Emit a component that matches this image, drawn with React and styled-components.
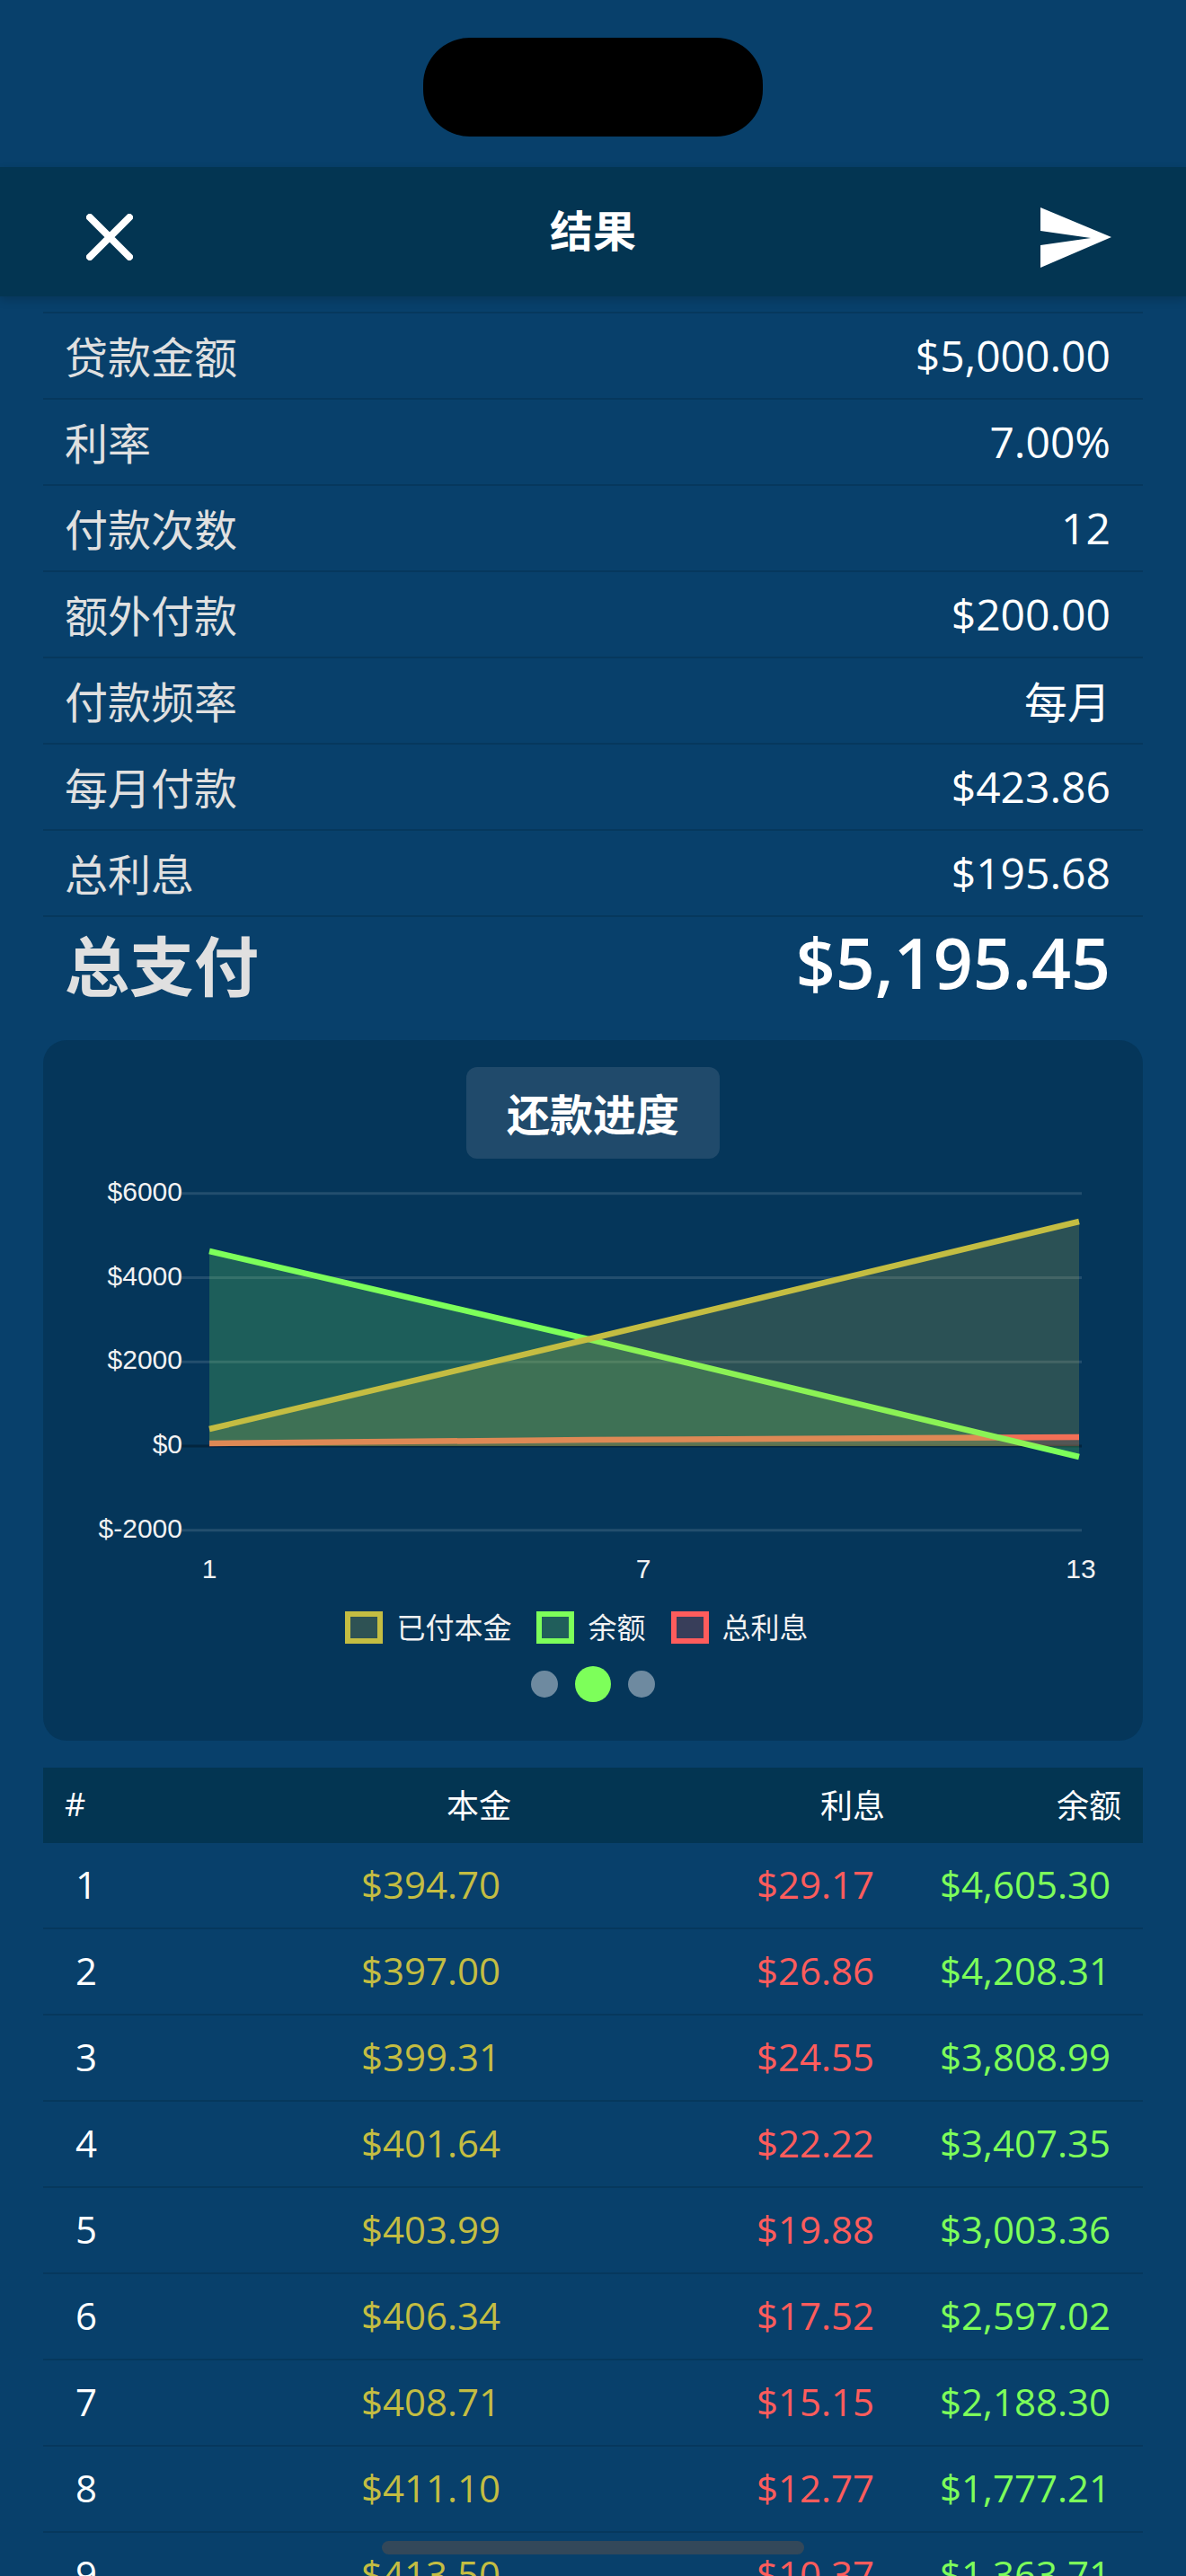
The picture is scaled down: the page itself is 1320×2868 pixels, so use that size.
import styled, { createGlobalStyle } from "styled-components"

const YELLOW = "#c4bd42"
const GREEN = "#7dff5a"
const RED = "#ff5c5c"
const CJK = `"Open Sans", "Noto Sans CJK SC", sans-serif`

const GlobalStyle = createGlobalStyle`
    html, body { margin: 0; padding: 0; background: #08406b; }
    * { box-sizing: border-box; }
`

const Screen = styled.div`
    position: relative;
    width: 1320px;
    height: 2868px;
    overflow: hidden;
    background: #08406b;
    font-family: ${CJK};
    color: #fff;
`

const StatusBar = styled.div`
    height: 186px;
    padding-top: 42px;
    display: flex;
    justify-content: center;
`

const Notch = styled.div`
    width: 378px;
    height: 110px;
    border-radius: 52px;
    background: #000;
`

const NavBar = styled.div`
    position: relative;
    height: 144px;
    padding: 0 83px;
    display: grid;
    grid-template-columns: 1fr auto 1fr;
    align-items: center;
    background: #033552;
    box-shadow: 0 4px 10px rgba(0, 0, 0, 0.16);
`

const NavTitle = styled.div`
    font-size: 48px;
    font-weight: 700;
    line-height: 1;
    margin-bottom: 2px;
`

const NavIcon = styled.svg`
    display: block;
    margin: 12px ${(p) => (p.$end ? 0 : "auto")} 0 ${(p) => (p.$end ? "auto" : "13px")};
`

const InfoList = styled.div`
    margin: 17px 48px 0;
    border-top: 2px solid rgba(0, 30, 50, 0.25);
`

const InfoRow = styled.div`
    height: 96px;
    padding: 0 36px 2px 24px;
    display: flex;
    justify-content: space-between;
    align-items: center;
    border-bottom: 2px solid rgba(0, 30, 50, 0.25);
    font-size: 48px;
`

const InfoLabel = styled.span`
    color: #e0e0e0;
`

const TotalRow = styled.div`
    height: 107px;
    padding: 0 36px 6px 24px;
    display: flex;
    justify-content: space-between;
    align-items: center;
`

const TotalLabel = styled.span`
    font-size: 72px;
    font-weight: 700;
    color: #e0e0e0;
`

const TotalValue = styled.span`
    font-size: 77px;
    font-weight: 600;
`

const ChartCard = styled.div`
    height: 780px;
    margin: 30px 48px 0;
    padding-top: 30px;
    border-radius: 26px;
    background: #05365a;
`

const ChartTitle = styled.div`
    width: 282px;
    height: 102px;
    margin: 0 auto;
    padding-bottom: 2px;
    display: flex;
    align-items: center;
    justify-content: center;
    border-radius: 12px;
    background: #204a6b;
    font-size: 48px;
    font-weight: 700;
`

const ChartSvg = styled.svg`
    display: block;
    width: 1224px;
    height: 504px;
    text {
        font-family: "Liberation Sans", Arial, sans-serif;
        font-size: 30px;
        fill: #f2f2f2;
    }
`

const Legend = styled.div`
    height: 36px;
    padding-right: 36px;
    display: flex;
    justify-content: center;
    gap: 28px;
`

const LegendItem = styled.div`
    display: flex;
    align-items: center;
    gap: 15px;
    font-size: 32px;
    line-height: 36px;
    color: #f2f2f2;
`

const LegendBox = styled.div`
    width: 42px;
    height: 36px;
    border: 6px solid ${(p) => p.$color};
    background: ${(p) => p.$fill};
`

const Dots = styled.div`
    height: 40px;
    margin-top: 25px;
    display: flex;
    justify-content: center;
    align-items: center;
    gap: 19px;
`

const Dot = styled.div`
    width: ${(p) => (p.$active ? 40 : 30)}px;
    height: ${(p) => (p.$active ? 40 : 30)}px;
    border-radius: 50%;
    background: ${(p) => (p.$active ? GREEN : "#6e8aa0")};
`

const Table = styled.div`
    margin: 30px 48px 0;
`

const TableHead = styled.div`
    height: 84px;
    padding: 0 24px 3px;
    display: grid;
    grid-template-columns: 190px 307px 416px 263px;
    align-items: center;
    background: #033552;
    font-size: 36px;
`

const HeadCell = styled.div`
    text-align: ${(p) => (p.$left ? "left" : "right")};
`

const TableRow = styled.div`
    height: 96px;
    padding: 0 24px 3px;
    display: grid;
    grid-template-columns: 190px 307px 416px 263px;
    align-items: center;
    border-bottom: 2px solid rgba(0, 30, 50, 0.25);
    font-size: 42px;
`

const IndexCell = styled.div`
    padding-left: 12px;
`

const MoneyCell = styled.div`
    padding-right: 12px;
    text-align: right;
    color: ${(p) => p.$color};
`

const HomeIndicator = styled.div`
    position: absolute;
    left: 425px;
    top: 2829px;
    width: 470px;
    height: 15px;
    border-radius: 8px;
    background: #33485a;
`

const details = [
    ["贷款金额", "$5,000.00"],
    ["利率", "7.00%"],
    ["付款次数", "12"],
    ["额外付款", "$200.00"],
    ["付款频率", "每月"],
    ["每月付款", "$423.86"],
    ["总利息", "$195.68"],
]

const payments = [
    ["1", "$394.70", "$29.17", "$4,605.30"],
    ["2", "$397.00", "$26.86", "$4,208.31"],
    ["3", "$399.31", "$24.55", "$3,808.99"],
    ["4", "$401.64", "$22.22", "$3,407.35"],
    ["5", "$403.99", "$19.88", "$3,003.36"],
    ["6", "$406.34", "$17.52", "$2,597.02"],
    ["7", "$408.71", "$15.15", "$2,188.30"],
    ["8", "$411.10", "$12.77", "$1,777.21"],
    ["9", "$413.50", "$10.37", "$1,363.71"],
]

// chart coordinates, relative to the top of the svg
const PLOT_LEFT = 185
const PLOT_MID = 607
const PLOT_RIGHT = 1153
const ZERO_Y = 320
const yOf = (v) => ZERO_Y - v * 0.046875

const gridValues = [6000, 4000, 2000, 0, -2000]
const xTicks = [
    { label: "1", x: PLOT_LEFT },
    { label: "7", x: 668 },
    { label: "13", x: PLOT_RIGHT + 2 },
]

// drawn in this order, the first legend entry ends up on top
const series = [
    { color: RED, ys: [317, 313, 310] },
    { color: GREEN, ys: [103, 201, 332] },
    { color: YELLOW, ys: [301, 201, 70] },
]

const linePoints = (ys) => `${PLOT_LEFT},${ys[0]} ${PLOT_MID},${ys[1]} ${PLOT_RIGHT},${ys[2]}`

const Chart = () => (
    <ChartSvg viewBox="0 0 1224 504">
        {gridValues.map((v) => (
            <g key={v}>
                <line
                    x1="154"
                    x2="1156"
                    y1={yOf(v)}
                    y2={yOf(v)}
                    stroke={v === 0 ? "rgba(0,0,0,0.3)" : "rgba(255,255,255,0.12)"}
                    strokeWidth="3"
                />
                <text x="155" y={yOf(v) + 8} textAnchor="end">
                    {v < 0 ? `$-${-v}` : `$${v}`}
                </text>
            </g>
        ))}
        {xTicks.map((t) => (
            <text key={t.label} x={t.x} y="467" textAnchor="middle">
                {t.label}
            </text>
        ))}
        {series.map((s) => (
            <g key={s.color}>
                <polygon
                    points={`${PLOT_LEFT},${ZERO_Y} ${linePoints(s.ys)} ${PLOT_RIGHT},${ZERO_Y}`}
                    fill={s.color}
                    fillOpacity="0.2"
                />
                <polyline points={linePoints(s.ys)} fill="none" stroke={s.color} strokeWidth="6.5" />
            </g>
        ))}
    </ChartSvg>
)

const App = () => (
    <Screen>
        <GlobalStyle />
        <StatusBar>
            <Notch />
        </StatusBar>
        <NavBar>
            <NavIcon width="52" height="52" viewBox="0 0 52 52">
                <path d="M4 4 L48 48 M48 4 L4 48" stroke="#fff" strokeWidth="8" strokeLinecap="round" fill="none" />
            </NavIcon>
            <NavTitle>结果</NavTitle>
            <NavIcon $end width="79" height="67" viewBox="0 0 79 67">
                <polygon points="0,0 79,33 0,67 0,42 56,34 0,26" fill="#fff" />
            </NavIcon>
        </NavBar>
        <InfoList>
            {details.map(([label, value]) => (
                <InfoRow key={label}>
                    <InfoLabel>{label}</InfoLabel>
                    <span>{value}</span>
                </InfoRow>
            ))}
            <TotalRow>
                <TotalLabel>总支付</TotalLabel>
                <TotalValue>$5,195.45</TotalValue>
            </TotalRow>
        </InfoList>
        <ChartCard>
            <ChartTitle>还款进度</ChartTitle>
            <Chart />
            <Legend>
                <LegendItem>
                    <LegendBox $color={YELLOW} $fill="#2e5254" />
                    已付本金
                </LegendItem>
                <LegendItem>
                    <LegendBox $color={GREEN} $fill="#205e5b" />
                    余额
                </LegendItem>
                <LegendItem>
                    <LegendBox $color={RED} $fill="#383e5a" />
                    总利息
                </LegendItem>
            </Legend>
            <Dots>
                <Dot />
                <Dot $active />
                <Dot />
            </Dots>
        </ChartCard>
        <Table>
            <TableHead>
                <HeadCell $left>#</HeadCell>
                <HeadCell>本金</HeadCell>
                <HeadCell>利息</HeadCell>
                <HeadCell>余额</HeadCell>
            </TableHead>
            {payments.map(([n, principal, interest, balance]) => (
                <TableRow key={n}>
                    <IndexCell>{n}</IndexCell>
                    <MoneyCell $color={YELLOW}>{principal}</MoneyCell>
                    <MoneyCell $color={RED}>{interest}</MoneyCell>
                    <MoneyCell $color={GREEN}>{balance}</MoneyCell>
                </TableRow>
            ))}
        </Table>
        <HomeIndicator />
    </Screen>
)

export default App
